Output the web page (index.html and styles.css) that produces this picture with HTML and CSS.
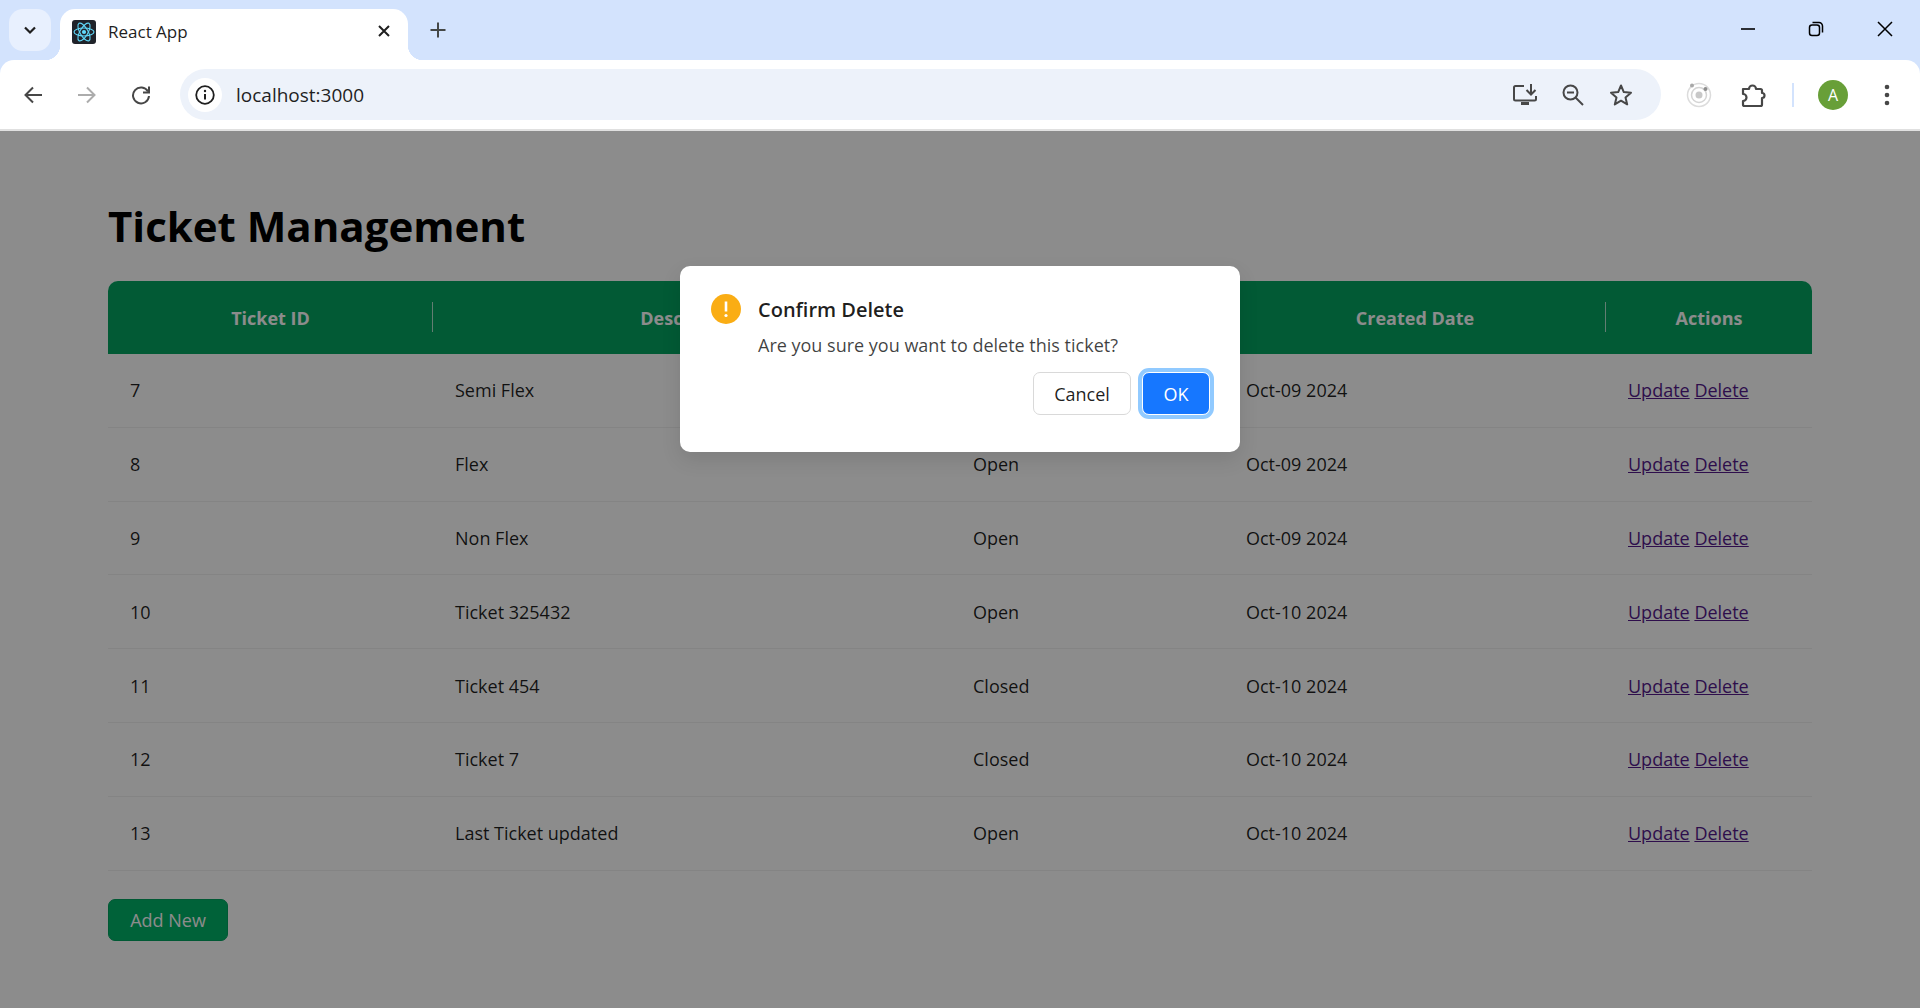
FILE: index.html
```html
<!DOCTYPE html>
<html>
<head>
  <meta charset="utf-8">
  <title>React App</title>
  <link rel="stylesheet" href="styles.css">
</head>
<body>
  <div class="browser-top">
    <div class="tabstrip">
      <div class="tab-search">
        <svg width="16" height="16" viewBox="0 0 16 16"><path d="M3 5.5l5 5 5-5" fill="none" stroke="#1f1f1f" stroke-width="2.2"/></svg>
      </div>
      <div class="tab">
        <svg class="favicon" width="24" height="24" viewBox="0 0 24 24">
          <rect width="24" height="24" rx="3" fill="#20232a"/>
          <circle cx="12" cy="12" r="2.1" fill="#61dafb"/>
          <g fill="none" stroke="#61dafb" stroke-width="1.1">
            <ellipse cx="12" cy="12" rx="10" ry="4"/>
            <ellipse cx="12" cy="12" rx="10" ry="4" transform="rotate(60 12 12)"/>
            <ellipse cx="12" cy="12" rx="10" ry="4" transform="rotate(120 12 12)"/>
          </g>
        </svg>
        <span class="tab-title">React App</span>
        <svg class="tab-close" width="14" height="14" viewBox="0 0 14 14"><path d="M2 2l10 10M12 2L2 12" stroke="#1f1f1f" stroke-width="2" fill="none"/></svg>
      </div>
      <div class="new-tab">
        <svg width="18" height="18" viewBox="0 0 18 18"><path d="M9 1.500v15M1.500 9h15" stroke="#444746" stroke-width="2" fill="none"/></svg>
      </div>
      <div class="spacer"></div>
      <div class="win-btn">
        <svg width="16" height="16" viewBox="0 0 16 16"><path d="M1 8h14" stroke="#000" stroke-width="1.600"/></svg>
      </div>
      <div class="win-btn">
        <svg width="16" height="16" viewBox="0 0 16 16" fill="none" stroke="#000" stroke-width="1.500"><rect x="1.500" y="4" width="10" height="10.500" rx="2.500"/><path d="M4.500 1.500h6.500a3.500 3.500 0 0 1 3.500 3.500v6.500"/></svg>
      </div>
      <div class="win-btn last">
        <svg width="16" height="16" viewBox="0 0 16 16"><path d="M1 1l14 14M15 1L1 15" stroke="#000" stroke-width="1.500" fill="none"/></svg>
      </div>
    </div>
    <div class="toolbar">
      <div class="tool-btn">
        <svg width="20" height="20" viewBox="0 0 20 20" fill="none" stroke="#474747" stroke-width="2"><path d="M19 10H2.500M10 2.500L2.500 10l7.500 7.500"/></svg>
      </div>
      <div class="tool-btn">
        <svg width="20" height="20" viewBox="0 0 20 20" fill="none" stroke="#acacac" stroke-width="2"><path d="M1 10h16.500M10 2.500l7.500 7.500-7.500 7.500"/></svg>
      </div>
      <div class="tool-btn">
        <svg width="20" height="20" viewBox="0 0 20 20" fill="none" stroke="#474747" stroke-width="2"><path d="M17 6.500A8 8 0 1 0 18 11"/><path d="M18 1.500V7.500H12" stroke-width="2"/></svg>
      </div>
      <div class="omnibox">
        <div class="site-info">
          <svg width="20" height="20" viewBox="0 0 20 20"><circle cx="10" cy="10" r="8.800" fill="none" stroke="#1f1f1f" stroke-width="1.800"/><path d="M10 9v5.500" stroke="#1f1f1f" stroke-width="2"/><circle cx="10" cy="6" r="1.200" fill="#1f1f1f"/></svg>
        </div>
        <span class="url">localhost:3000</span>
        <div class="spacer"></div>
        <div class="omni-icon">
          <svg width="26" height="24" viewBox="0 0 26 24" fill="none" stroke="#474747" stroke-width="2"><path d="M12 3H3.500a1.500 1.500 0 0 0-1.500 1.500V16a1.500 1.500 0 0 0 1.500 1.500h19A1.500 1.500 0 0 0 24 16v-3"/><path d="M19 1v10M14.500 7l4.500 4.500L23.500 7"/><path d="M9 20.500h8" stroke-width="3"/></svg>
        </div>
        <div class="omni-icon">
          <svg width="24" height="24" viewBox="0 0 24 24" fill="none" stroke="#474747" stroke-width="2"><circle cx="9.500" cy="9.500" r="7"/><path d="M14.500 14.500l7.500 7.500"/><path d="M6 9.500h7"/></svg>
        </div>
        <div class="omni-icon">
          <svg width="24" height="24" viewBox="0 0 24 24" fill="none" stroke="#474747" stroke-width="2" stroke-linejoin="round"><path d="M12 2.500l2.800 6.600 7.200.6-5.500 4.700 1.700 7-6.200-3.700-6.200 3.700 1.700-7L2 9.700l7.200-.6z"/></svg>
        </div>
      </div>
      <div class="tool-btn first-ext">
        <svg width="26" height="26" viewBox="0 0 26 26" fill="none"><circle cx="13" cy="13" r="11.500" stroke="#dcdcdc" stroke-width="1.500"/><circle cx="13" cy="13" r="7.500" stroke="#d4d4d4" stroke-width="1.500"/><circle cx="13" cy="13" r="3.500" fill="#c8c8c8"/><circle cx="6" cy="3.500" r="2" fill="#a8a8a8"/><circle cx="19.500" cy="7" r="2" fill="#8e8e8e"/></svg>
      </div>
      <div class="tool-btn">
        <svg width="26" height="26" viewBox="0 0 26 26" fill="none" stroke="#474747" stroke-width="2.200" stroke-linejoin="round"><path d="M3 7h6a3.500 3.500 0 0 1 7 0h4.500a1.500 1.500 0 0 1 1.500 1.500V11a2.500 2.500 0 0 1 0 5v6.500a1.500 1.500 0 0 1-1.500 1.500H4.500A1.500 1.500 0 0 1 3 22.500V19a3.500 3.500 0 0 0 0-7z"/></svg>
      </div>
      <div class="tool-sep"></div>
      <div class="tool-btn">
        <div class="avatar">A</div>
      </div>
      <div class="tool-btn">
        <svg width="6" height="22" viewBox="0 0 6 22" fill="#474747"><circle cx="3" cy="3" r="2.300"/><circle cx="3" cy="11" r="2.300"/><circle cx="3" cy="19" r="2.300"/></svg>
      </div>
    </div>
    <div class="toolbar-edge"></div>
  </div>

  <div class="page">
    <h1 class="page-title">Ticket Management</h1>
    <table class="tickets">
      <thead>
        <tr>
          <th class="col-id">Ticket ID</th>
          <th class="col-desc">Description</th>
          <th class="col-status">Status</th>
          <th class="col-date">Created Date</th>
          <th class="col-actions">Actions</th>
        </tr>
      </thead>
      <tbody>
        <tr><td>7</td><td>Semi Flex</td><td>Open</td><td>Oct-09 2024</td><td><a href="#">Update</a> <a href="#">Delete</a></td></tr>
        <tr><td>8</td><td>Flex</td><td>Open</td><td>Oct-09 2024</td><td><a href="#">Update</a> <a href="#">Delete</a></td></tr>
        <tr><td>9</td><td>Non Flex</td><td>Open</td><td>Oct-09 2024</td><td><a href="#">Update</a> <a href="#">Delete</a></td></tr>
        <tr><td>10</td><td>Ticket 325432</td><td>Open</td><td>Oct-10 2024</td><td><a href="#">Update</a> <a href="#">Delete</a></td></tr>
        <tr><td>11</td><td>Ticket 454</td><td>Closed</td><td>Oct-10 2024</td><td><a href="#">Update</a> <a href="#">Delete</a></td></tr>
        <tr><td>12</td><td>Ticket 7</td><td>Closed</td><td>Oct-10 2024</td><td><a href="#">Update</a> <a href="#">Delete</a></td></tr>
        <tr><td>13</td><td>Last Ticket updated</td><td>Open</td><td>Oct-10 2024</td><td><a href="#">Update</a> <a href="#">Delete</a></td></tr>
      </tbody>
    </table>
    <button class="add-btn">Add New</button>

    <div class="mask"></div>
    <div class="modal">
      <div class="modal-head">
        <svg class="warn-icon" width="30" height="30" viewBox="0 0 30 30"><circle cx="15" cy="15" r="15" fill="#faad14"/><path d="M15 7.500v10" stroke="#fff" stroke-width="2.600"/><circle cx="15" cy="21.500" r="1.600" fill="#fff"/></svg>
        <span class="modal-title">Confirm Delete</span>
      </div>
      <div class="modal-text">Are you sure you want to delete this ticket?</div>
      <div class="modal-btns">
        <button class="btn-cancel">Cancel</button>
        <button class="btn-ok">OK</button>
      </div>
    </div>
  </div>
</body>
</html>
```

FILE: styles.css
```css
html, body {
  margin: 0;
  height: 100%;
  overflow: hidden;
}
body {
  display: flex;
  flex-direction: column;
  font-family: "Open Sans", "Noto Sans", sans-serif;
  background: #fff;
}
.spacer {
  flex: 1;
}

/* browser top */
.browser-top {
  background: #d3e3fd;
}
.tabstrip {
  height: 60px;
  display: flex;
  padding-left: 9px;
  box-sizing: border-box;
}
.tab-search {
  width: 42px;
  height: 42px;
  margin-top: 9px;
  margin-right: 9px;
  background: #e8f0fe;
  border-radius: 14px;
  display: flex;
  align-items: center;
  justify-content: center;
}
.tab {
  position: relative;
  width: 348px;
  height: 51px;
  margin-top: 9px;
  background: #fff;
  border-radius: 15px 15px 0 0;
  display: flex;
  align-items: center;
  padding: 0 17px 0 12px;
  box-sizing: border-box;
}
.tab::before, .tab::after {
  content: "";
  position: absolute;
  bottom: 0;
  width: 15px;
  height: 15px;
}
.tab::before {
  left: -15px;
  background: radial-gradient(circle at 0 0, transparent 15px, #fff 15.500px);
}
.tab::after {
  right: -15px;
  background: radial-gradient(circle at 100% 0, transparent 15px, #fff 15.500px);
}
.favicon {
  margin-top: -6px;
}
.tab-title {
  margin-left: 12px;
  margin-top: -6px;
  flex: 1;
  font-size: 17px;
  color: #1f1f1f;
}
.tab-close {
  margin-top: -8px;
}
.new-tab {
  width: 42px;
  height: 42px;
  margin-top: 9px;
  margin-left: 9px;
  display: flex;
  align-items: center;
  justify-content: center;
}
.win-btn {
  width: 68px;
  height: 58px;
  display: flex;
  align-items: center;
  justify-content: center;
}
.win-btn.last {
  width: 70px;
}

.toolbar {
  height: 69px;
  background: #fff;
  border-radius: 14px 14px 0 0;
  display: flex;
  align-items: center;
  padding: 0 6px;
  box-sizing: border-box;
}
.tool-btn {
  width: 54px;
  height: 54px;
  display: flex;
  align-items: center;
  justify-content: center;
}
.omnibox {
  flex: 1;
  height: 51px;
  margin-left: 12px;
  margin-right: 11px;
  background: #edf2fa;
  border-radius: 26px;
  display: flex;
  align-items: center;
  padding: 0 16px 0 8px;
}
.site-info {
  width: 34px;
  height: 34px;
  border-radius: 50%;
  background: #fff;
  display: flex;
  align-items: center;
  justify-content: center;
}
.url {
  margin-left: 14px;
  font-size: 19px;
  color: #1f1f1f;
}
.omni-icon {
  width: 48px;
  display: flex;
  justify-content: center;
}
.tool-sep {
  width: 2px;
  height: 24px;
  margin: 0 12px;
  background: #d3e3fd;
}
.avatar {
  width: 30px;
  height: 30px;
  border-radius: 50%;
  background: #689f38;
  color: #fff;
  font-size: 16px;
  display: flex;
  align-items: center;
  justify-content: center;
}
.toolbar-edge {
  height: 2px;
  background: #e0e0e0;
}

/* page */
.page {
  position: relative;
  flex: 1;
  padding: 0 108px;
  background: #fff;
}
.page-title {
  margin: 0;
  height: 150px;
  display: flex;
  align-items: center;
  padding-top: 38px;
  box-sizing: border-box;
  font-size: 42px;
  font-weight: 700;
  color: #000;
}
.tickets {
  width: 100%;
  border-collapse: separate;
  border-spacing: 0;
  table-layout: fixed;
  font-size: 18px;
  color: rgba(0, 0, 0, 0.88);
}
.tickets th {
  position: relative;
  height: 73px;
  padding: 0 22px;
  background: #04a462;
  color: #fff;
  font-weight: 700;
  text-align: center;
}
.tickets th:first-child {
  border-top-left-radius: 10px;
}
.tickets th:last-child {
  border-top-right-radius: 10px;
}
.tickets th::before {
  content: "";
  position: absolute;
  top: 21px;
  right: 0;
  width: 1px;
  height: 30px;
  background: rgba(255, 255, 255, 0.7);
}
.tickets th:last-child::before {
  display: none;
}
.col-id { width: 281px; }
.col-desc { width: 474px; }
.col-status { width: 229px; }
.col-date { width: 338px; }
.tickets td {
  height: 73.800px;
  padding: 0 22px;
  box-sizing: border-box;
  border-bottom: 1px solid #f0f0f0;
}
.tickets a {
  color: #551a8b;
}
.add-btn {
  display: block;
  width: 120px;
  height: 42px;
  margin-top: 28px;
  background: #00b269;
  color: #fff;
  border: 1px solid #00a35f;
  border-radius: 7px;
  font-family: inherit;
  font-size: 18px;
  padding: 0;
}

/* confirm modal */
.mask {
  position: absolute;
  top: 0;
  left: 0;
  right: 0;
  bottom: 0;
  background: rgba(0, 0, 0, 0.45);
}
.modal {
  position: absolute;
  top: 135px;
  left: 680px;
  width: 560px;
  height: 186px;
  box-sizing: border-box;
  padding: 25px 30px;
  background: #fff;
  border-radius: 10px;
  box-shadow: 0 8px 20px rgba(0, 0, 0, 0.1);
}
.modal-head {
  display: flex;
  align-items: center;
  height: 36px;
  font-size: 20px;
  font-weight: 600;
  color: rgba(0, 0, 0, 0.88);
}
.warn-icon {
  margin-left: 1px;
  margin-right: 17px;
}
.modal-text {
  margin-left: 48px;
  margin-top: 6px;
  font-size: 18px;
  color: rgba(0, 0, 0, 0.75);
}
.modal-btns {
  display: flex;
  justify-content: flex-end;
  gap: 11px;
  margin-top: 15px;
}
.modal-btns button {
  height: 43px;
  font-family: inherit;
  font-size: 18px;
  border-radius: 7px;
  padding: 0;
}
.btn-cancel {
  width: 98px;
  background: #fff;
  border: 1px solid #d9d9d9;
  color: rgba(0, 0, 0, 0.88);
}
.btn-ok {
  width: 68px;
  background: #1677ff;
  border: 1px solid #fff;
  color: #fff;
  outline: 4px solid #91caff;
}
```
